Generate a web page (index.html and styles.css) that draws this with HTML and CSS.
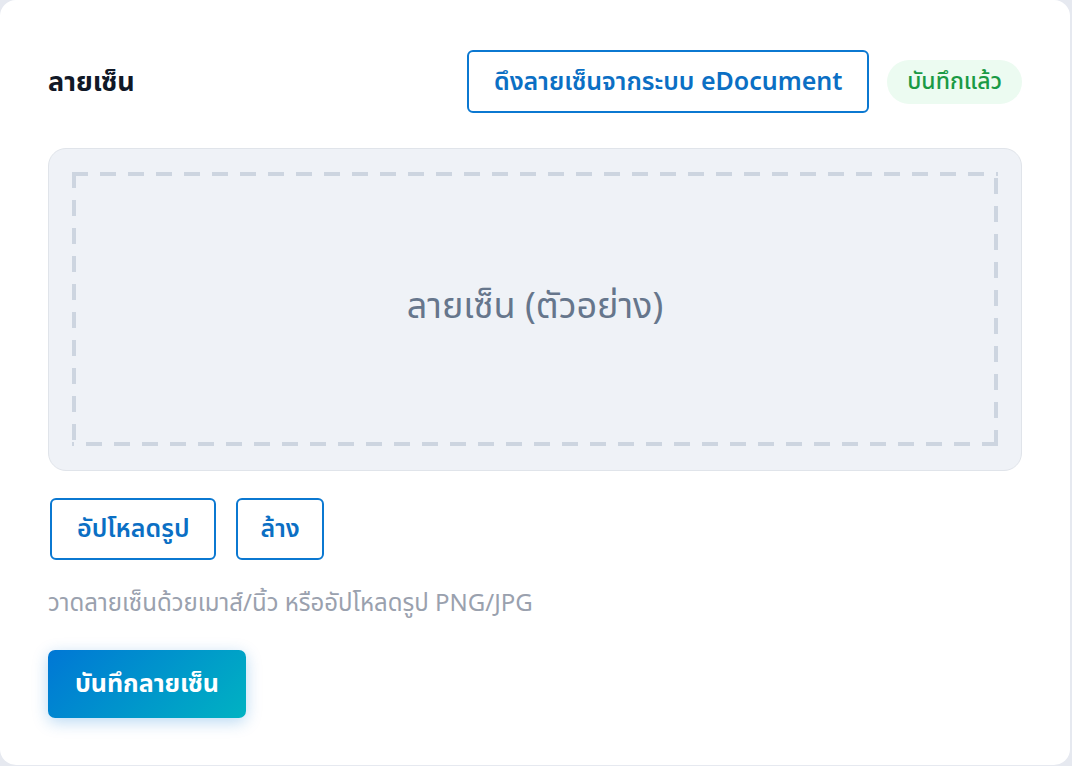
FILE: index.html
```html
<!DOCTYPE html>
<html lang="th">
<head>
    <meta charset="UTF-8">
    <meta name="viewport" content="width=device-width, initial-scale=1.0">
    <title>ลายเซ็น</title>
    <link rel="stylesheet" href="styles.css">
</head>
<body>
    <div class="card">
        <div class="head-row">
            <h2>ลายเซ็น</h2>
            <div class="head-actions">
                <button class="btn-outline btn-big">ดึงลายเซ็นจากระบบ eDocument</button>
                <span class="badge">บันทึกแล้ว</span>
            </div>
        </div>

        <div class="sign-pad">
            <div class="sign-inner">
                <span>ลายเซ็น (ตัวอย่าง)</span>
            </div>
        </div>

        <div class="tools">
            <button class="btn-outline">อัปโหลดรูป</button>
            <button class="btn-outline btn-clear">ล้าง</button>
        </div>

        <p class="hint">วาดลายเซ็นด้วยเมาส์/นิ้ว หรืออัปโหลดรูป PNG/JPG</p>

        <button class="btn-save">บันทึกลายเซ็น</button>
    </div>
</body>
</html>
```

FILE: styles.css
```css
* {
    margin: 0;
    padding: 0;
    box-sizing: border-box;
    font-family: "Noto Sans", "Noto Sans Thai", sans-serif;
}

body {
    background-color: #e6e9f0;
    width: 1072px;
    height: 766px;
    overflow: hidden;
}

.card {
    width: 1070px;
    height: 765px;
    background-color: #ffffff;
    border-radius: 16px;
    padding: 50px 48px 0 48px;
}

.head-row {
    display: flex;
    justify-content: space-between;
    align-items: center;
}

.head-row h2 {
    font-size: 27px;
    font-weight: 700;
    color: #111827;
    padding-top: 2px;
}

.head-actions {
    display: flex;
    align-items: center;
    gap: 18px;
}

.btn-outline {
    background: #fff;
    border: 2px solid #0b78d1;
    border-radius: 6px;
    color: #0b6fc4;
    font-size: 25px;
    font-weight: 600;
    height: 62px;
    padding: 0 25px;
    cursor: pointer;
}

.btn-clear {
    padding: 0 22px;
}

.btn-big {
    width: 402px;
    height: 63px;
    padding: 0;
}

.badge {
    display: inline-flex;
    align-items: center;
    height: 44px;
    padding: 0 20px;
    border-radius: 22px;
    background-color: #ecfbf1;
    color: #1a9a45;
    font-size: 23px;
    font-weight: 500;
}

.sign-pad {
    margin-top: 35px;
    height: 323px;
    background-color: #eff2f7;
    border: 1px solid #e0e4ea;
    border-radius: 18px;
    padding: 23px 23px 24px 23px;
}

.sign-inner {
    height: 100%;
    display: flex;
    align-items: center;
    justify-content: center;
    background:
        repeating-linear-gradient(90deg, #cdd5e0 0 16px, transparent 16px 28px) left top / 100% 4px no-repeat,
        repeating-linear-gradient(270deg, #cdd5e0 0 16px, transparent 16px 28px) left bottom / 100% 4px no-repeat,
        repeating-linear-gradient(180deg, #cdd5e0 0 16px, transparent 16px 28px) left top / 4px 100% no-repeat,
        repeating-linear-gradient(0deg, #cdd5e0 0 16px, transparent 16px 28px) right top / 4px 100% no-repeat;
}

.sign-inner span {
    font-size: 36px;
    font-weight: 400;
    color: #66768c;
    padding-bottom: 4px;
}

.tools {
    display: flex;
    gap: 20px;
    margin-top: 27px;
    padding-left: 2px;
}

.hint {
    margin-top: 25px;
    font-size: 24px;
    color: #9aa1ae;
}

.btn-save {
    margin-top: 28px;
    width: 198px;
    height: 68px;
    border: none;
    border-radius: 7px;
    background: linear-gradient(135deg, #0077d5, #00b2c2);
    color: #ffffff;
    font-size: 25px;
    font-weight: 700;
    box-shadow: 0 4px 16px rgba(0, 119, 213, 0.28);
    cursor: pointer;
}
```
